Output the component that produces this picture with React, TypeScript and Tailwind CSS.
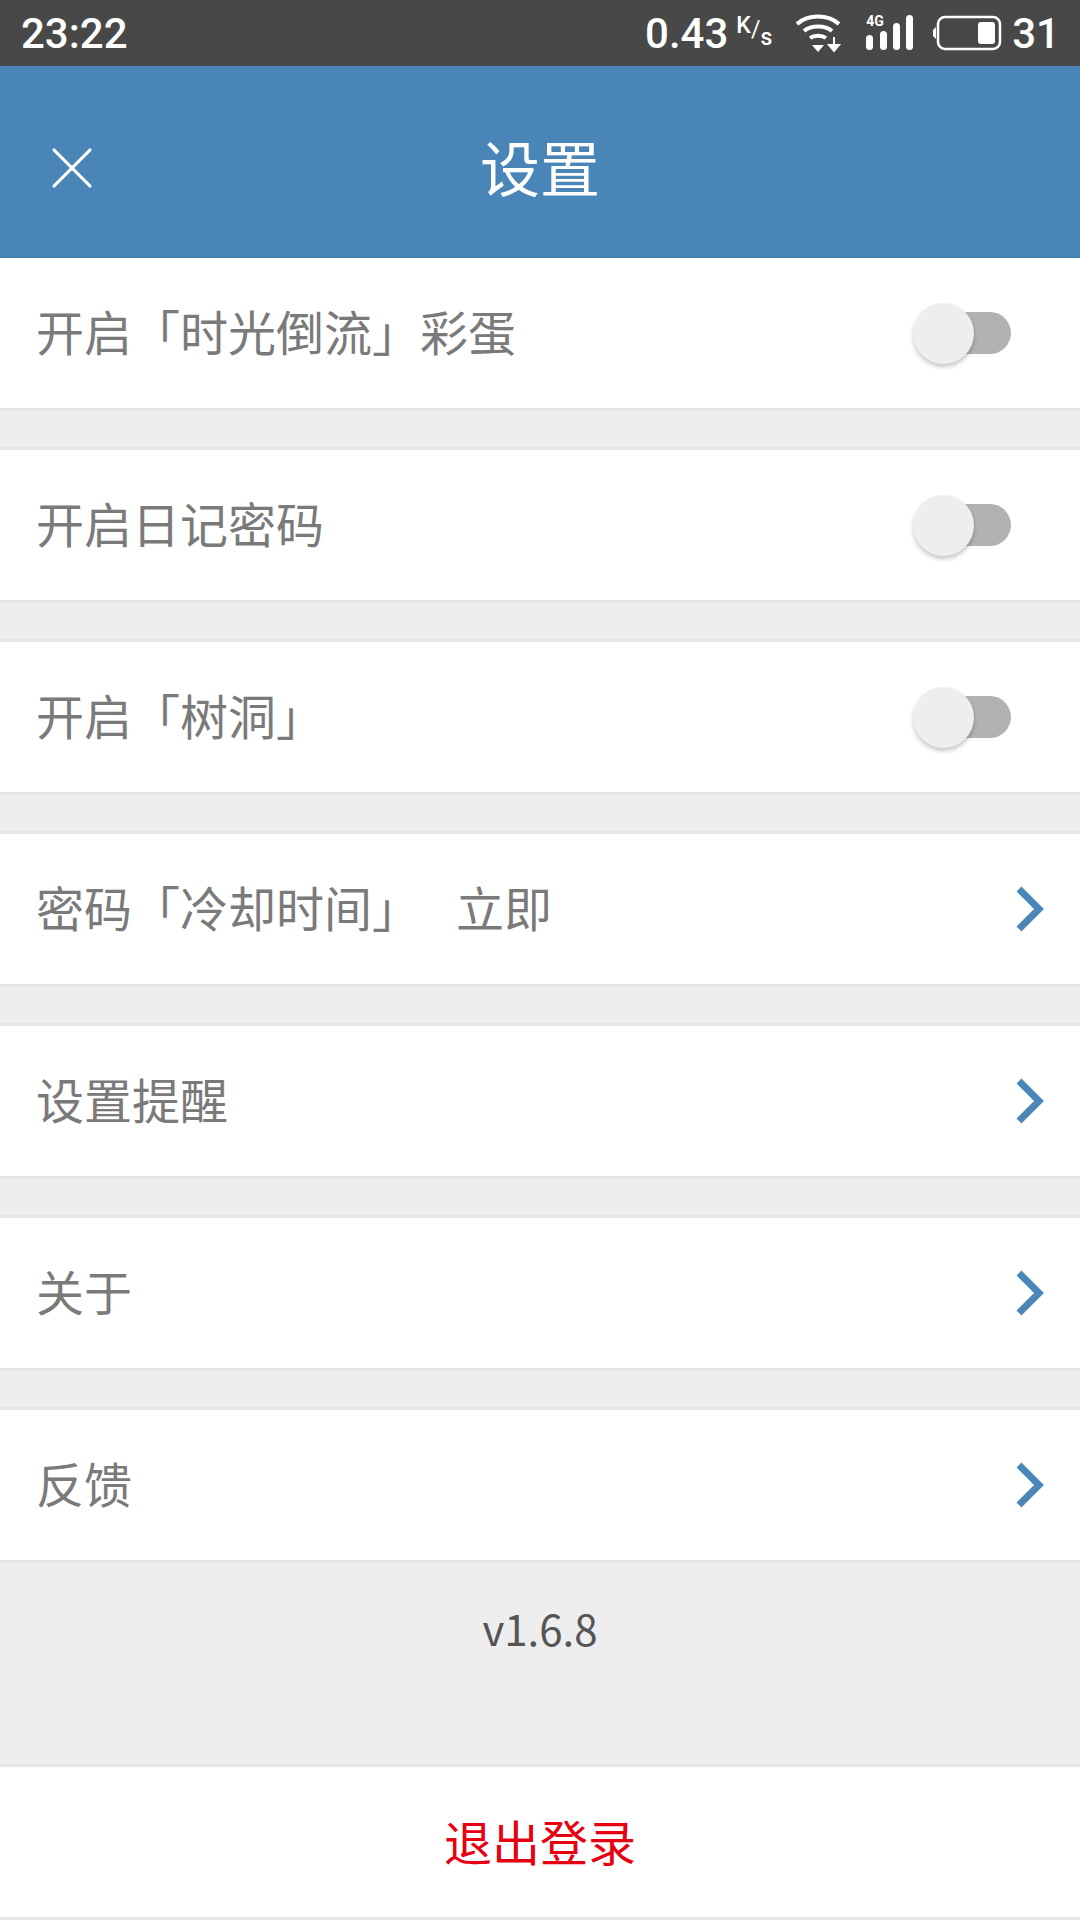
import { X } from 'lucide-react';

const cjk = { fontFamily: '"Noto Sans CJK SC", sans-serif' };

const Toggle = () => (
  <div className="relative mr-[69px] h-[42px] w-[81px] rounded-full bg-[#b2b2b2]">
    <div className="absolute -top-[9px] -left-[18px] size-[61px] translate-x-[1px] rounded-full bg-[#eeeeee] shadow-[0_3px_4px_rgba(0,0,0,0.22)]" />
  </div>
);

const Chevron = () => (
  <svg width="30" height="48" viewBox="0 0 30 48" className="mr-[35px]">
    <path d="M4 4 L24 24 L4 44" fill="none" stroke="#4a86b8" strokeWidth="7" />
  </svg>
);

const Row = ({ children, right }: { children: React.ReactNode; right: React.ReactNode }) => (
  <div className="flex h-[153px] items-center justify-between border-b-[3px] border-[#e6e6e6] bg-white pl-[36px]">
    <div className="mb-[6px] flex text-[48px] leading-none text-[#7a7a7a]">{children}</div>
    {right}
  </div>
);

const Spacer = () => <div className="h-[39px] border-b-[3px] border-[#e6e6e6] bg-[#eeeeee]" />;

const StatusIcons = () => (
  <>
    <svg width="47" height="40" viewBox="0 0 47 40" className="ml-[23px]">
      <g fill="none" stroke="#fff" strokeWidth="4">
        <path d="M2 11 C13 1 33 1 44 11" />
        <path d="M9 18 C16 12 30 12 37 18" />
        <path d="M15 25 C19 22 27 22 31 25" />
      </g>
      <path d="M17 32 H29 L23 39 Z" fill="#fff" />
      <path d="M39 24 V33 M34 32 H44 L39 38 Z" fill="#fff" stroke="#fff" strokeWidth="2" />
    </svg>
    <div className="relative ml-[24px] h-[36px] w-[49px]">
      <span
        className="absolute -top-[1px] left-0 text-[14px] leading-[14px] font-bold text-white"
        style={{ fontFamily: 'Roboto, sans-serif' }}
      >
        4G
      </span>
      <svg width="49" height="36" viewBox="0 0 49 36" className="absolute top-0 left-0">
        <g fill="#fff">
          <rect x="0" y="20" width="7" height="15" rx="3.5" />
          <rect x="14" y="16" width="7" height="19" rx="3.5" />
          <rect x="27" y="8" width="7" height="27" rx="3.5" />
          <rect x="40" y="0" width="7" height="35" rx="3.5" />
        </g>
      </svg>
    </div>
    <svg width="70" height="36" viewBox="0 0 70 36" className="ml-[17px]">
      <path d="M1 15 L4 12 V24 L1 21 Z" fill="#fff" />
      <rect x="6" y="2" width="62" height="32" rx="7" fill="none" stroke="#fff" strokeWidth="2.5" />
      <rect x="46" y="7" width="17" height="22" rx="3" fill="#fff" />
    </svg>
  </>
);

export default function App() {
  return (
    <div lang="zh-CN" className="flex h-[1920px] w-[1080px] flex-col overflow-hidden bg-[#eeeeee]" style={cjk}>
      <div
        className="flex h-[66px] items-center justify-between bg-[#484848] pr-[20px] pl-[21px] text-[42px] font-medium text-white"
        style={{ fontFamily: 'Roboto, sans-serif' }}
      >
        <span>23:22</span>
        <div className="flex items-center">
          <span>0.43</span>
          <span className="ml-[8px] flex items-start text-[23px] leading-none">
            <span className="-mt-[4px]">K</span>
            <span className="font-normal">/</span>
            <span className="mt-[8px]">s</span>
          </span>
          <StatusIcons />
          <span className="ml-[10px]">31</span>
        </div>
      </div>

      <div className="relative flex h-[192px] items-center justify-center border-b-[3px] border-[#437fb0] bg-[#4985b7]">
        <X size={72} strokeWidth={1.05} color="#ffffff" className="absolute top-[66px] left-[36px]" />
        <span className="mt-[11px] text-[60px] leading-none text-white">设置</span>
      </div>

      <Row right={<Toggle />}>开启「时光倒流」彩蛋</Row>
      <Spacer />
      <Row right={<Toggle />}>开启日记密码</Row>
      <Spacer />
      <Row right={<Toggle />}>开启「树洞」</Row>
      <Spacer />
      <Row right={<Chevron />}>
        <span>密码「冷却时间」</span>
        <span className="ml-[36px]">立即</span>
      </Row>
      <Spacer />
      <Row right={<Chevron />}>设置提醒</Row>
      <Spacer />
      <Row right={<Chevron />}>关于</Row>
      <Spacer />
      <Row right={<Chevron />}>反馈</Row>

      <div className="h-[201px] pt-[44px] text-center text-[42px] leading-none text-[#555555]">v1.6.8</div>

      <div className="flex h-[156px] items-center justify-center border-y-[3px] border-[#e6e6e6] bg-white pb-[4px] text-[48px] leading-none text-[#e60012]">
        退出登录
      </div>
    </div>
  );
}
